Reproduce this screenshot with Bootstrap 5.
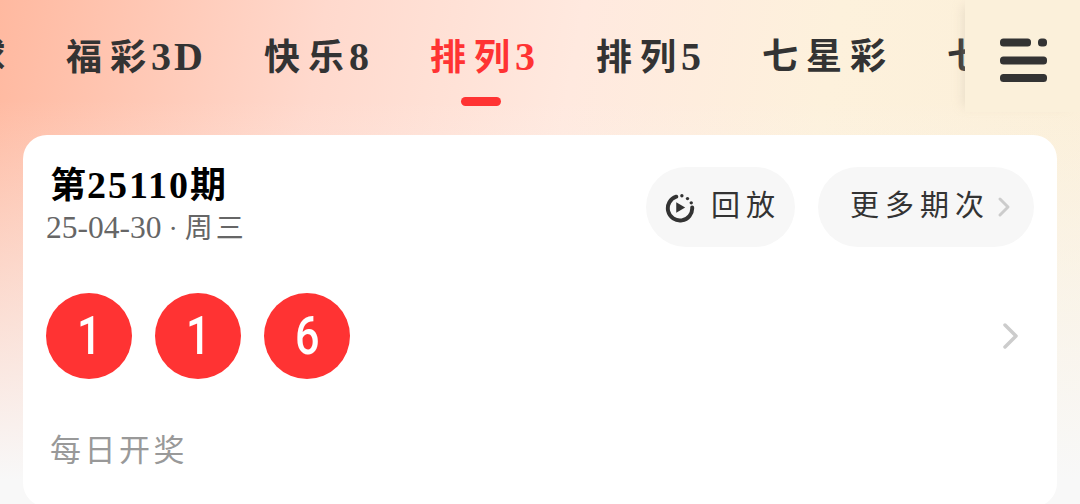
<!DOCTYPE html>
<html lang="zh">
<head>
<meta charset="utf-8">
<title>排列3</title>
<link href="https://cdn.jsdelivr.net/npm/bootstrap@5.3.0/dist/css/bootstrap.min.css" rel="stylesheet">
<style>
html,body{height:504px;overflow:hidden}
body{position:relative;font-family:"Liberation Serif","Noto Sans CJK SC",serif;
background:linear-gradient(to bottom,rgba(248,248,248,0) 0,rgba(248,248,248,0) 100px,#f8f8f8 480px),linear-gradient(100deg,#ffb9a0 0,#ffd9cd 28%,#ffe9df 50%,#fdf1dc 72%,#fbefd8 100%)}
.tabstrip{height:135px;overflow:hidden;padding-top:32px;gap:61px;margin-left:-119px;white-space:nowrap}
.tabitem{position:relative;font-size:36px;line-height:50px;font-weight:700;color:#333;flex:none}
.headchars{letter-spacing:8px}
.tailchar{letter-spacing:5px}
.tabitem.on{color:#ff3333}
.tabitem.on::after{content:"";position:absolute;left:31px;top:65px;width:40px;height:9px;border-radius:5px;background:#ff3333}
.latin-a{font-size:40px;letter-spacing:3px;margin-right:-3px}
.menubox{position:absolute;right:0;top:0;width:115px;height:112px;background:#fbf0da;box-shadow:-8px 0 10px -6px rgba(200,190,170,.35)}
.menubox svg{position:absolute;left:35px;top:37px}
.sheet{margin:0 23px;height:372px;background:#fff;border-radius:24px;padding:28px 23px 0}
.issue{font-size:36px;line-height:44px;font-weight:700;color:#000;padding-left:4px}
.latin-b{font-size:38px;letter-spacing:2px;margin-left:1px}
.issue-date{font-size:28px;line-height:39px;color:#666;letter-spacing:3px}
.latin-c{font-size:31.5px;letter-spacing:0}
.dotsep{letter-spacing:0}
.pillbtn{height:80px;border-radius:40px;background:#f7f7f7;color:#333;font-size:29px;letter-spacing:6px;flex:none}
.pill-a{width:149px;margin-right:23px;gap:16px;padding-left:19px}
.pill-b{width:216px;gap:7px;padding-left:32px}
.headrow{margin-top:4px}
.ballrow{margin-top:45px;gap:23px}
.ball{width:86px;height:86px;border-radius:50%;background:#ff3333;color:#fff;font-family:"Roboto",sans-serif;font-size:54px;font-weight:500;line-height:1;flex:none}
.ball span{display:block;transform:scaleX(.8)}
.foot{font-size:31px;line-height:44px;letter-spacing:3.5px;color:#999;padding-left:4px;margin-top:50px}
.rowarrow{margin-right:14px}
</style>
</head>
<body>
<div class="tabstrip d-flex">
  <div class="tabitem"><span class="headchars">双色</span>球</div>
  <div class="tabitem"><span class="headchars">福</span><span class="tailchar">彩</span><span class="latin-a">3D</span></div>
  <div class="tabitem"><span class="headchars">快</span><span class="tailchar">乐</span><span class="latin-a">8</span></div>
  <div class="tabitem on"><span class="headchars">排</span><span class="tailchar">列</span><span class="latin-a">3</span></div>
  <div class="tabitem"><span class="headchars">排</span><span class="tailchar">列</span><span class="latin-a">5</span></div>
  <div class="tabitem"><span class="headchars">七星</span>彩</div>
  <div class="tabitem"><span class="headchars">七乐</span>彩</div>
</div>
<div class="menubox">
  <svg width="48" height="46" viewBox="0 0 48 46" fill="#333"><rect x="0" y="1.5" width="31" height="8" rx="3.5"/><rect x="38" y="1.5" width="9" height="8" rx="3.5"/><rect x="0" y="19.5" width="47" height="8" rx="3.5"/><rect x="0" y="37" width="47" height="8" rx="3.5"/></svg>
</div>
<div class="sheet">
  <div class="d-flex justify-content-between align-items-start">
    <div>
      <div class="issue">第<span class="latin-b">25110</span>期</div>
      <div class="issue-date"><span class="latin-c">25-04-30</span><span class="dotsep"> · </span>周三</div>
    </div>
    <div class="d-flex headrow">
      <div class="pillbtn pill-a d-flex align-items-center">
        <svg width="30" height="31" viewBox="0 0 32 32"><path d="M12 4.5A13 13 0 1 0 29 16" fill="none" stroke="#333" stroke-width="4.2" stroke-linecap="round"/><path d="M12 10.5v11l9.5-5.5z" fill="#333"/><circle cx="18" cy="3.5" r="1.8" fill="#333"/><circle cx="24" cy="6.5" r="1.8" fill="#333"/><circle cx="28" cy="11" r="1.8" fill="#333"/></svg>
        <span>回放</span>
      </div>
      <div class="pillbtn pill-b d-flex align-items-center">
        <span>更多期次</span>
        <svg width="14" height="22" viewBox="0 0 14 22"><path d="M3 3l8 8-8 8" fill="none" stroke="#ccc" stroke-width="3" stroke-linecap="round" stroke-linejoin="round"/></svg>
      </div>
    </div>
  </div>
  <div class="d-flex align-items-center ballrow">
    <div class="ball d-flex align-items-center justify-content-center"><span>1</span></div>
    <div class="ball d-flex align-items-center justify-content-center"><span>1</span></div>
    <div class="ball d-flex align-items-center justify-content-center"><span>6</span></div>
    <svg class="ms-auto rowarrow" width="18" height="28" viewBox="0 0 18 28"><path d="M3 3l11 11L3 25" fill="none" stroke="#ccc" stroke-width="3.5" stroke-linecap="round" stroke-linejoin="round"/></svg>
  </div>
  <div class="foot">每日开奖</div>
</div>
<script src="https://cdn.jsdelivr.net/npm/bootstrap@5.3.0/dist/js/bootstrap.bundle.min.js"></script>
</body>
</html>
